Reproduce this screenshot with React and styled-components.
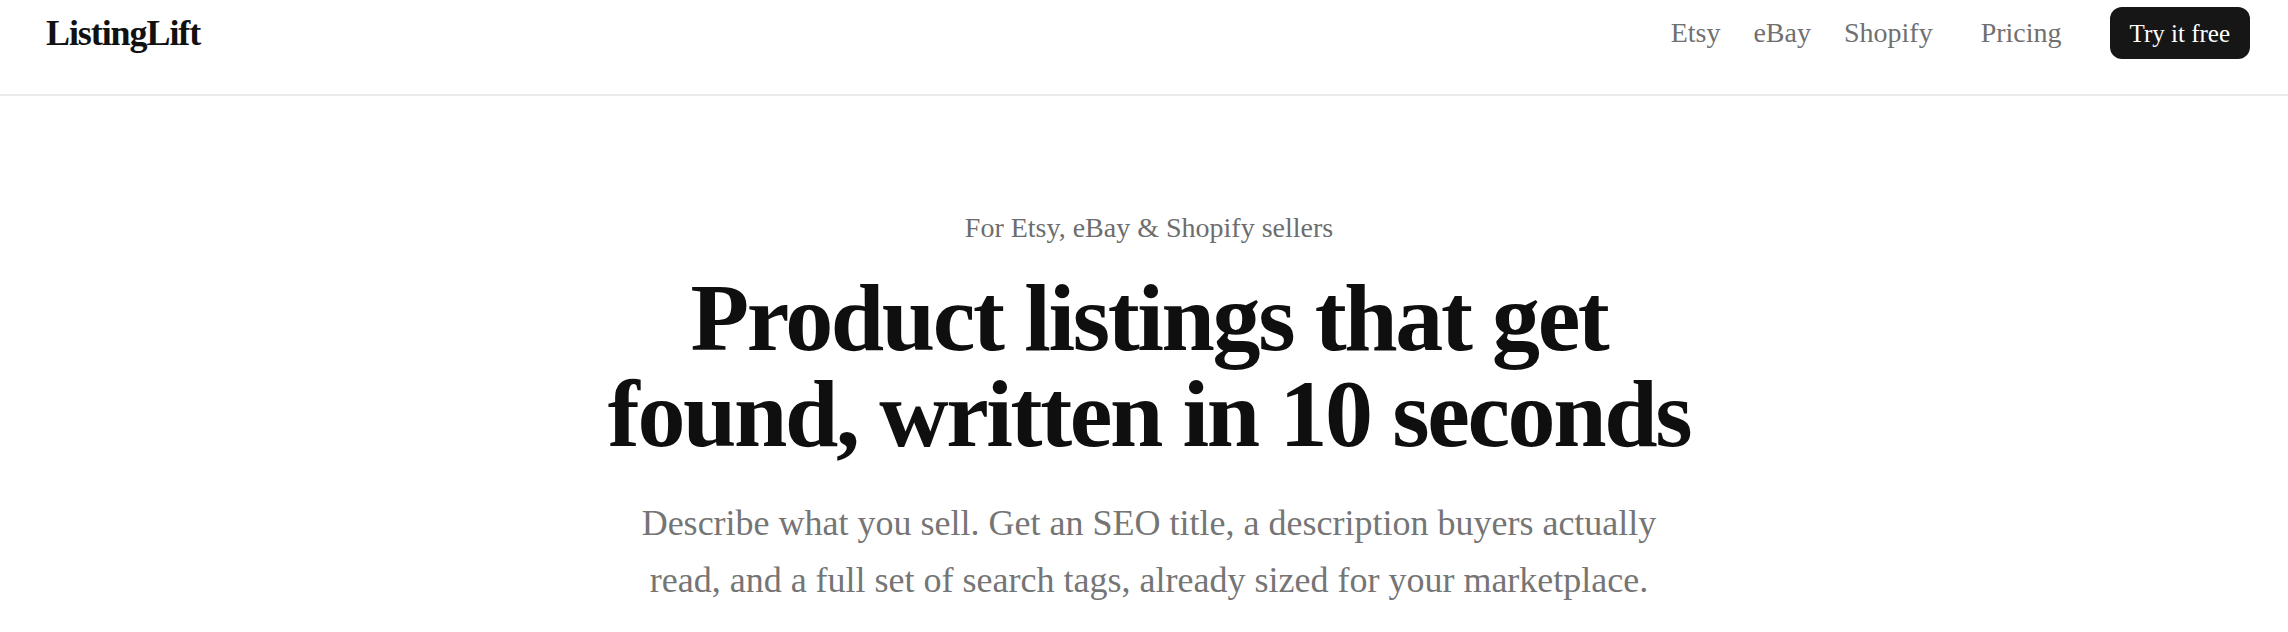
import React from "react";
import styled, { createGlobalStyle } from "styled-components";

const GlobalStyle = createGlobalStyle`
  * {
    box-sizing: border-box;
  }
  body {
    margin: 0;
    background: #ffffff;
    font-family: "Liberation Serif", "Times New Roman", serif;
    color: #111111;
  }
`;

const Header = styled.header`
  height: 96px;
  padding: 7px 38px 35px 46px;
  display: flex;
  align-items: center;
  justify-content: space-between;
  border-bottom: 2px solid #ebebeb;
`;

const Logo = styled.a`
  font-size: 36px;
  line-height: 1;
  font-weight: 700;
  letter-spacing: -0.03em;
  color: #111111;
  text-decoration: none;
`;

const Nav = styled.nav`
  display: flex;
  align-items: center;
  gap: 48px;
`;

const Markets = styled.div`
  display: flex;
  align-items: center;
  gap: 33px;
`;

const NavLink = styled.a`
  font-size: 28px;
  line-height: 1;
  color: #707070;
  text-decoration: none;
`;

const CtaButton = styled.button`
  height: 52px;
  padding: 0 20px;
  border: none;
  border-radius: 12px;
  background: #161616;
  color: #ffffff;
  font-family: inherit;
  font-size: 25px;
  line-height: 1;
  cursor: pointer;
`;

const Hero = styled.section`
  padding: 118px 36px 0 46px;
  display: flex;
  flex-direction: column;
  align-items: center;
  text-align: center;
`;

const Eyebrow = styled.p`
  margin: 0;
  font-size: 28px;
  line-height: 1;
  color: #6d6d6d;
`;

const Headline = styled.h1`
  margin: 28px 0 0;
  max-width: 1140px;
  font-size: 96px;
  line-height: 1;
  font-weight: 700;
  letter-spacing: -0.025em;
  color: #0f0f0f;
`;

const Lead = styled.p`
  margin: 33px 0 0;
  max-width: 1050px;
  font-size: 36px;
  line-height: 1.58;
  color: #757575;
`;

export default function App() {
  return (
    <>
      <GlobalStyle />
      <Header>
        <Logo href="#">ListingLift</Logo>
        <Nav>
          <Markets>
            <NavLink href="#">Etsy</NavLink>
            <NavLink href="#">eBay</NavLink>
            <NavLink href="#">Shopify</NavLink>
          </Markets>
          <NavLink href="#">Pricing</NavLink>
          <CtaButton>Try it free</CtaButton>
        </Nav>
      </Header>
      <Hero>
        <Eyebrow>For Etsy, eBay &amp; Shopify sellers</Eyebrow>
        <Headline>Product listings that get found, written in 10 seconds</Headline>
        <Lead>
          Describe what you sell. Get an SEO title, a description buyers
          actually read, and a full set of search tags, already sized for your
          marketplace.
        </Lead>
      </Hero>
    </>
  );
}
